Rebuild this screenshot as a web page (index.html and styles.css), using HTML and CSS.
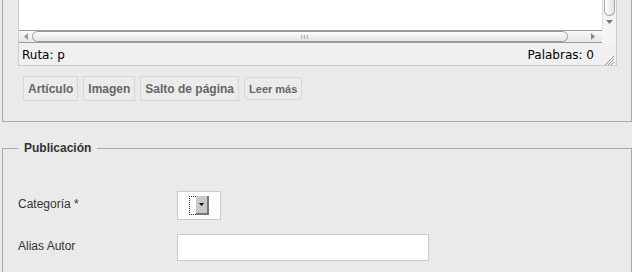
FILE: index.html
```html
<!DOCTYPE html>
<html lang="es">
<head>
  <meta charset="UTF-8">
  <meta name="viewport" content="width=device-width, initial-scale=1.0">
  <title>Editar artículo</title>
  <link rel="stylesheet" href="styles.css">
</head>
<body>
  <fieldset class="panel panel-editor">
    <div class="editor">
      <div class="editor-area">
        <div class="editor-content"></div>
        <div class="vscroll">
          <div class="vthumb"></div>
          <svg class="arrow-down" width="7" height="4" viewBox="0 0 7 4"><path d="M0 0h7L3.5 4z" fill="#777"/></svg>
        </div>
        <div class="hscroll">
          <div class="hcap">
            <svg width="4" height="7" viewBox="0 0 4 7"><path d="M4 0v7L0 3.5z" fill="#999"/></svg>
          </div>
          <div class="hthumb"><span class="grip">III</span></div>
          <div class="hcap hcap-right">
            <svg width="4" height="7" viewBox="0 0 4 7"><path d="M0 0v7l4-3.5z" fill="#888"/></svg>
          </div>
        </div>
        <div class="corner"></div>
      </div>
      <div class="statusbar">
        <span>Ruta: p</span>
        <span class="words">Palabras: 0</span>
        <svg class="resize" width="10" height="10" viewBox="0 0 10 10">
          <path d="M10 1L1 10M10 4L4 10M10 7L7 10" stroke="#999" stroke-width="1"/>
        </svg>
      </div>
    </div>
    <div class="buttons">
      <button class="button">Artículo</button>
      <button class="button">Imagen</button>
      <button class="button">Salto de página</button>
      <button class="button button-small">Leer más</button>
    </div>
  </fieldset>

  <fieldset class="panel panel-pub">
    <legend>Publicación</legend>
    <div class="form-grid">
      <label>Categoría *</label>
      <div class="select">
        <span class="focus-ring"></span>
        <span class="select-btn">
          <svg width="5" height="3" viewBox="0 0 5 3"><path d="M0 0h5L2.5 3z" fill="#000"/></svg>
        </span>
      </div>
      <label for="alias">Alias Autor</label>
      <input type="text" id="alias" class="text-input">
    </div>
  </fieldset>
</body>
</html>
```

FILE: styles.css
```css
body {
  margin: 0;
  width: 632px;
  background-color: #eaeaea;
  font-family: "Liberation Sans", Arial, sans-serif;
  font-size: 12px;
  color: #333;
}

.panel {
  margin: 0 0 0 2px;
  border: 1px solid #aaa;
  box-sizing: border-box;
  width: 630px;
}

.panel-editor {
  border-top: none;
  padding: 0 14px 20px 15px;
}

.editor {
  border: 1px solid #ccc;
  border-top: none;
  width: 599px;
  box-sizing: border-box;
}

.editor-area {
  display: grid;
  grid-template-columns: 1fr 14px;
  grid-template-rows: 30px 13px;
}

.editor-content {
  background-color: #fff;
}

.vscroll {
  background-color: #f4f4f4;
  border-left: 1px solid #ddd;
  display: flex;
  flex-direction: column;
  align-items: center;
  padding: 0 1px;
}

.vthumb {
  width: 11px;
  height: 16px;
  border: 1px solid #aaa;
  border-top: none;
  border-radius: 0 0 6px 6px;
  background: linear-gradient(to right, #fdfdfd, #e3e3e3);
  box-sizing: border-box;
}

.arrow-down {
  margin-top: 4px;
}

.hscroll {
  display: flex;
  align-items: center;
  border-top: 1px solid #999;
  border-bottom: 1px solid #999;
  background: linear-gradient(#f9f9f9, #e6e6e6);
  box-sizing: border-box;
  padding: 0 1px;
}

.hcap {
  width: 12px;
  height: 11px;
  display: flex;
  align-items: center;
  justify-content: center;
}

.hcap-right {
  margin-left: auto;
  width: 16px;
}

.hthumb {
  width: 536px;
  height: 11px;
  border: 1px solid #999;
  border-radius: 6px;
  background: linear-gradient(#ffffff, #e4e4e4);
  box-sizing: border-box;
  display: flex;
  align-items: center;
  justify-content: center;
}

.grip {
  font-size: 6px;
  letter-spacing: 1px;
  color: #888;
  font-family: "DejaVu Sans", sans-serif;
  margin-left: 10px;
}

.corner {
  background-color: #f4f4f4;
}

.statusbar {
  display: flex;
  align-items: center;
  height: 22px;
  padding: 2px 3px 0;
  box-sizing: border-box;
  background-color: #f0f0f0;
  font-family: "DejaVu Sans", sans-serif;
  font-size: 12px;
  color: #000;
  position: relative;
}

.words {
  margin-left: auto;
  margin-right: 19px;
}

.resize {
  position: absolute;
  right: 2px;
  bottom: 0;
}

.buttons {
  display: flex;
  gap: 5px;
  margin-top: 10px;
  padding-left: 5px;
}

.button {
  height: 25px;
  padding: 1px 4px 0;
  border: 1px solid #d6d6d6;
  background-color: #ebebeb;
  color: #666;
  font-family: "Liberation Sans", Arial, sans-serif;
  font-size: 12px;
  font-weight: bold;
  cursor: pointer;
}

.button-small {
  height: 23px;
  margin-top: 1px;
  font-size: 11px;
  border-radius: 4px;
}

.panel-pub {
  margin-top: 19px;
  border-bottom: none;
  padding: 0 15px;
  height: 140px;
}

legend {
  padding: 0 6px;
  font-weight: bold;
  color: #333;
  line-height: 14px;
}

.form-grid {
  display: grid;
  grid-template-columns: 159px auto;
  row-gap: 14px;
  margin-top: 36px;
  justify-items: start;
  align-items: center;
}

.form-grid label {
  padding-bottom: 3px;
}

.select {
  width: 44px;
  height: 29px;
  border: 1px solid #ccc;
  background-color: #fff;
  box-sizing: border-box;
  display: flex;
  align-items: center;
  padding-left: 11px;
}

.focus-ring {
  width: 7px;
  height: 19px;
  border: 1px dotted #333;
  border-right: none;
  box-sizing: border-box;
}

.select-btn {
  width: 13px;
  height: 19px;
  background-color: #c8c8c8;
  border-right: 2px solid #777;
  border-bottom: 2px solid #777;
  box-sizing: border-box;
  display: flex;
  align-items: center;
  justify-content: center;
}

.text-input {
  width: 252px;
  height: 27px;
  border: 1px solid #ccc;
  background-color: #fff;
  box-sizing: border-box;
  margin: 0;
}
```
